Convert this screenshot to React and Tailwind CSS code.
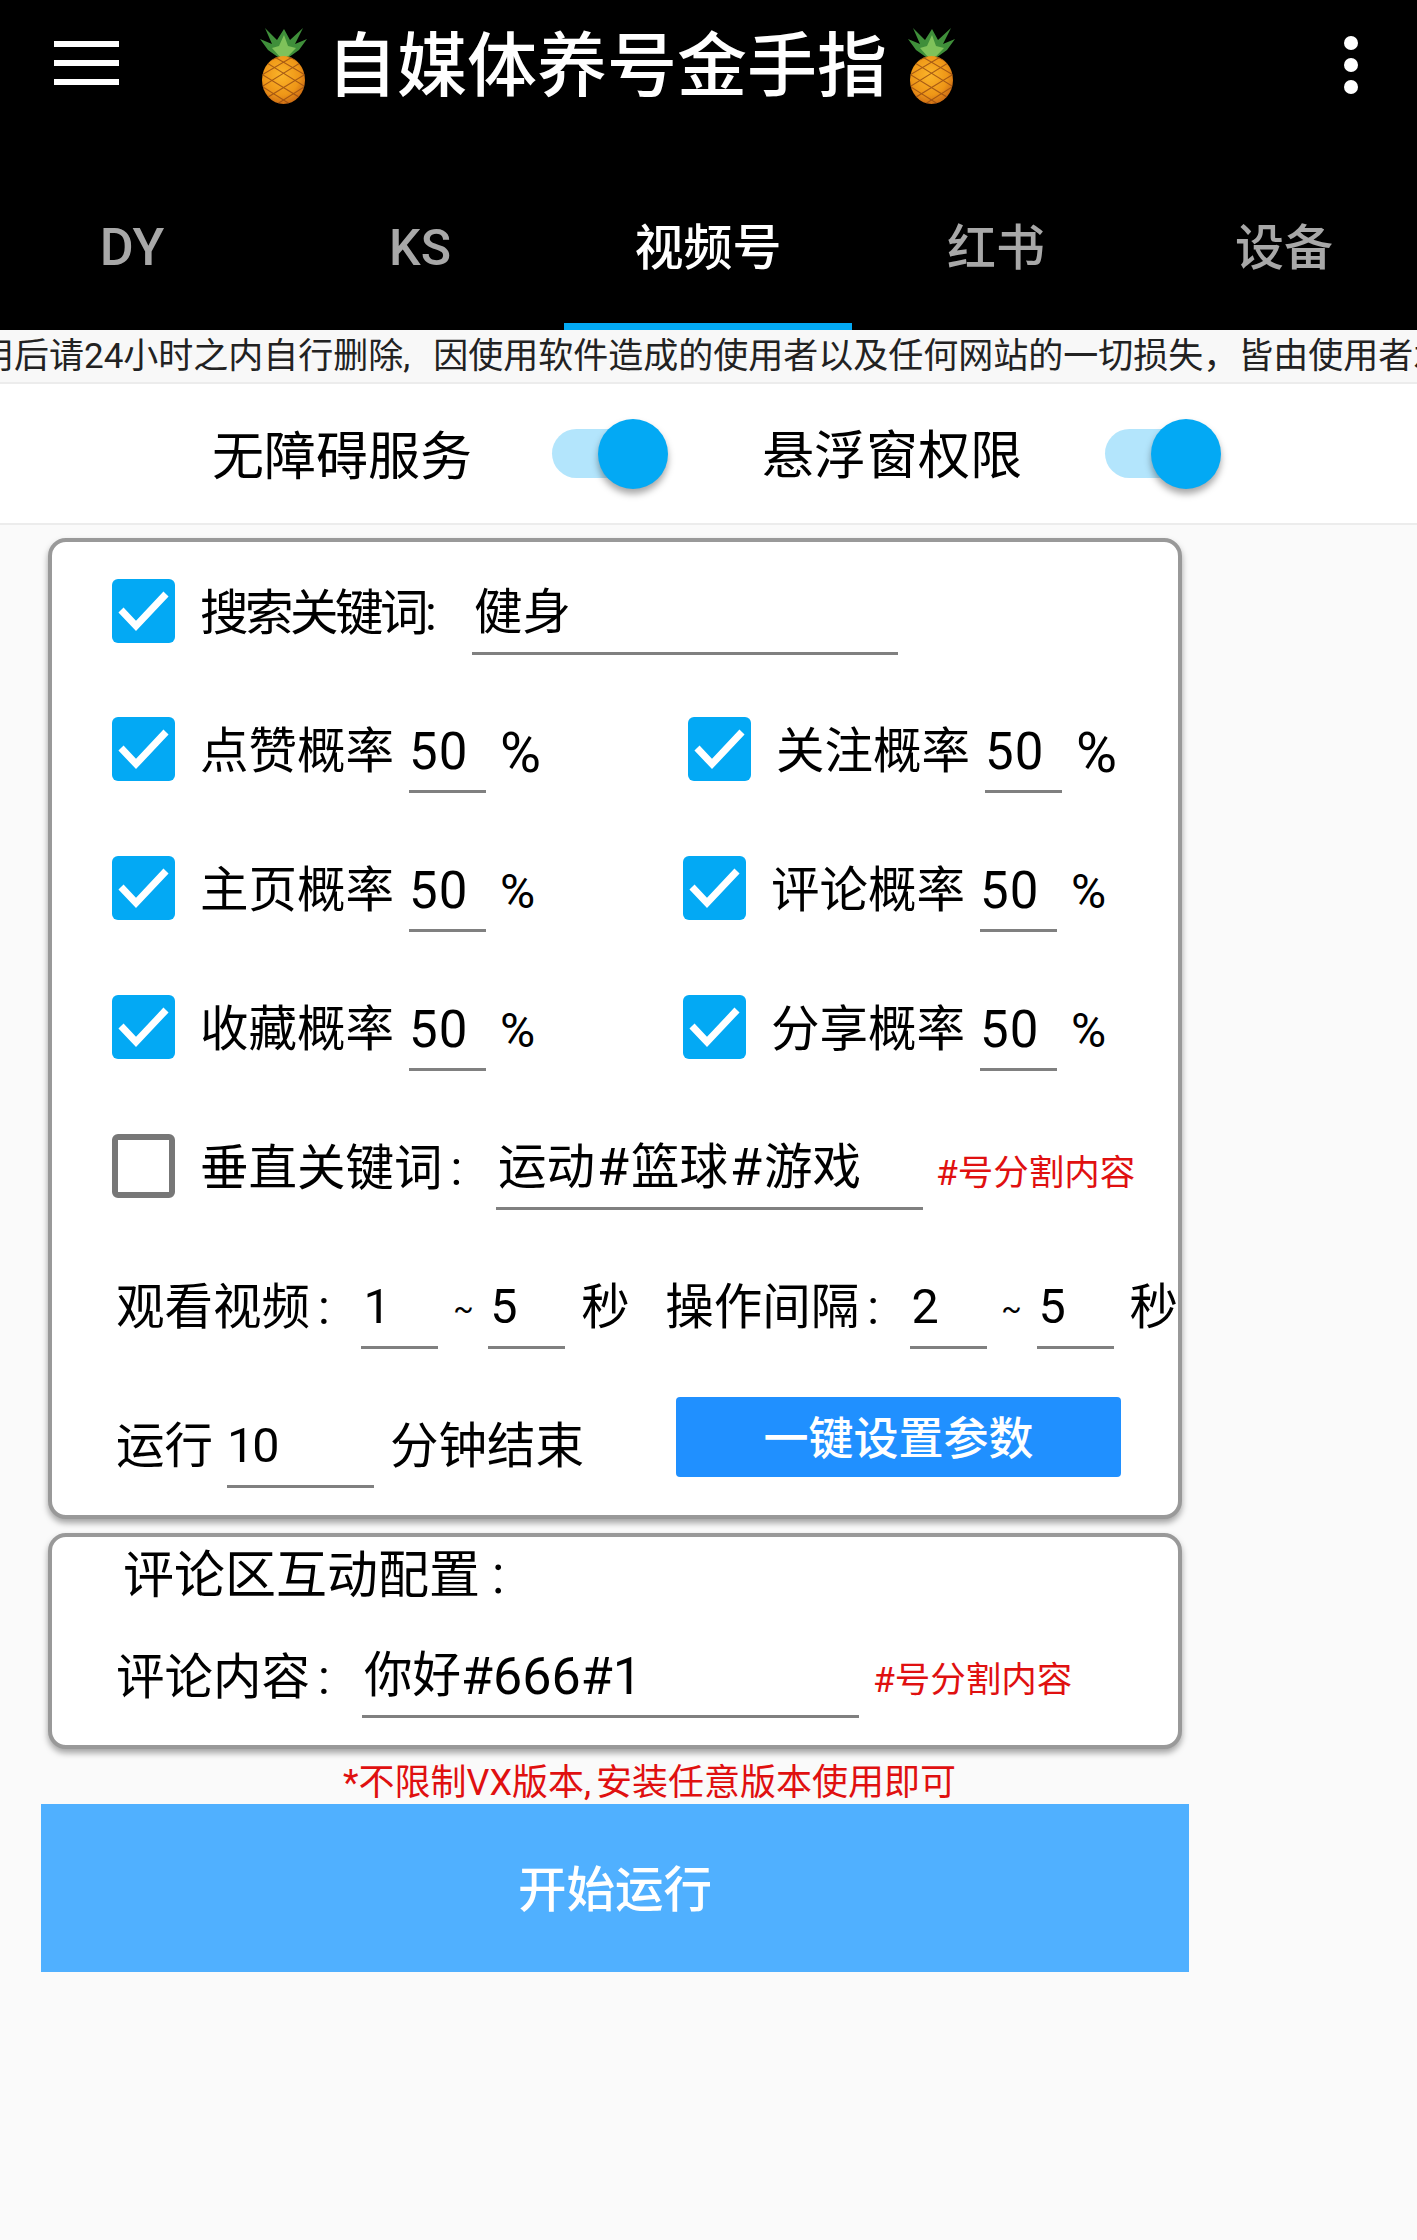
import React from 'react';

function Pineapple({ id }) {
    return (
        <svg width="47" height="76" viewBox="0 0 47 76" className="shrink-0">
            <defs>
                <radialGradient id={id} cx="0.45" cy="0.4" r="0.7">
                    <stop offset="0" stopColor="#fbb52a" />
                    <stop offset="0.6" stopColor="#ee9618" />
                    <stop offset="1" stopColor="#bd5a14" />
                </radialGradient>
                <clipPath id={id + 'c'}>
                    <ellipse cx="23.5" cy="52" rx="21.5" ry="24" />
                </clipPath>
            </defs>
            <path d="M23.5 33 L8 22 L0 11 L12 16 L5 0 L17 12 L24 1 L30 12 L43 0 L35 16 L47 11 L39 22 Z" fill="#3f8f3a" />
            <path d="M23.5 33 L12 20 L19 18 L24 7 L28 18 L36 20 Z" fill="#7fc25a" />
            <ellipse cx="23.5" cy="52" rx="21.5" ry="24" fill={`url(#${id})`} />
            <g clipPath={`url(#${id}c)`} stroke="#9a4f14" strokeWidth="1.1" fill="none" opacity="0.85">
                <path d="M-10 42 L20 28 M-10 54 L34 28 M-10 66 L48 30 M0 74 L52 42 M14 78 L52 54" />
                <path d="M57 42 L27 28 M57 54 L13 28 M57 66 L-1 30 M47 74 L-5 42 M33 78 L-5 54" />
            </g>
        </svg>
    );
}

function Check({ checked = true }) {
    if (!checked) {
        return <div className="w-[63px] h-[64px] shrink-0 rounded-[6px] border-[6px] border-[#777] bg-white" />;
    }
    return (
        <div className="w-[63px] h-[64px] shrink-0 rounded-[6px] bg-[#03a9f4]">
            <svg width="63" height="64" viewBox="0 0 63 64">
                <path d="M9 31 L24 47 L54 15" fill="none" stroke="white" strokeWidth="7" />
            </svg>
        </div>
    );
}

function Field({ width, children }) {
    return (
        <div className={`h-[88px] shrink-0 flex items-center whitespace-nowrap pt-[8px] border-b-[3px] border-[#808080] pl-[2px] ${width}`}>
            {children}
        </div>
    );
}

function Prob({ label, small, col }) {
    return (
        <div className={`flex items-center shrink-0 ${col}`}>
            <Check />
            <span className="ml-[25px] w-[193px] pt-[8px] whitespace-nowrap">{label}</span>
            <div className="ml-[16px]">
                <Field width="w-[77px]">
                    <span className="text-[51px] -ml-[2px] tracking-[1px]">50</span>
                </Field>
            </div>
            <span className={`ml-[14px] pt-[8px] ${small ? 'text-[48px]' : 'text-[56px]'}`}>%</span>
        </div>
    );
}

function Toggle() {
    return (
        <div className="relative w-[116px] h-[70px] shrink-0">
            <div className="absolute left-0 top-[10px] w-[92px] h-[49px] rounded-full bg-[#b3e5fc]" />
            <div className="absolute right-0 top-0 w-[70px] h-[70px] rounded-full bg-[#03a9f4] shadow-[0_5px_7px_rgba(0,0,0,0.35)]" />
        </div>
    );
}

function Row({ children, className = 'h-[139px]' }) {
    return <div className={`flex items-center shrink-0 ${className}`}>{children}</div>;
}

const tabs = ['DY', 'KS', '视频号', '红书', '设备'];

export default function App() {
    return (
        <div className="min-h-[2240px] bg-[#fafafa] text-black text-[48.5px] leading-none font-['Roboto','Noto_Sans_CJK_SC',sans-serif] overflow-hidden">
            {/* header */}
            <div className="bg-black h-[330px] overflow-hidden">
                <div className="h-[165px]">
                    <div className="h-[132px] flex items-center pl-[54px]">
                        <div className="w-[65px] mb-[7px] flex flex-col gap-[13px]">
                            <div className="h-[6px] bg-white" />
                            <div className="h-[6px] bg-white" />
                            <div className="h-[6px] bg-white" />
                        </div>
                        <div className="ml-[141px] flex items-center">
                            <Pineapple id="pa" />
                            <span className="ml-[20px] w-[581px] pt-[2px] text-[70px] font-medium text-white whitespace-nowrap">自媒体养号金手指</span>
                            <Pineapple id="pb" />
                        </div>
                        <div className="ml-auto mr-[59px] mb-[3px] flex flex-col gap-[8px]">
                            <div className="w-[14px] h-[14px] rounded-full bg-white" />
                            <div className="w-[14px] h-[14px] rounded-full bg-white" />
                            <div className="w-[14px] h-[14px] rounded-full bg-white" />
                        </div>
                    </div>
                </div>
                <div className="h-[165px] flex -ml-[12px]">
                    {tabs.map((t, i) => (
                        <div
                            key={t}
                            className={`w-[288px] shrink-0 flex items-center justify-center font-medium border-b-[7px] pt-[8px] ${i === 0 ? 'text-[52px]' : i === 1 ? 'text-[50px]' : 'text-[49px]'} ${i === 2 ? 'text-white border-[#03a9f4]' : 'text-[#a8a8a8] border-black'}`}
                        >
                            {t}
                        </div>
                    ))}
                </div>
            </div>

            {/* scrolling notice */}
            <div className="h-[54px] bg-[#f8f8f8] border-b-2 border-[#ececec] flex items-center overflow-hidden whitespace-nowrap text-[35px] text-[#222]">
                <span className="-ml-[21px]">
                    用后请24小时之内自行删除,<span className="ml-[23px]">因使用软件造成的使用者以及任何网站的一切损失，</span><span>皆由使用者承</span>
                </span>
            </div>

            {/* permission switches */}
            <div className="h-[141px] bg-white border-b-2 border-[#ececec] flex items-center pl-[212px] text-[52px]">
                <span className="w-[257px] pt-[8px] whitespace-nowrap">无障碍服务</span>
                <div className="ml-[83px]"><Toggle /></div>
                <span className="ml-[94px] w-[257px] pt-[6px] whitespace-nowrap">悬浮窗权限</span>
                <div className="ml-[86px]"><Toggle /></div>
            </div>

            <div className="w-[1148px] ml-[41px]">
                <div className="mx-[7px] mt-[13px] flex flex-col gap-[14px]">
                    {/* main settings card */}
                    <div className="bg-white border-[4px] border-[#999] rounded-[18px] pb-[2px] shadow-[0_4px_6px_rgba(0,0,0,0.35)]">
                        <Row className="h-[137px] pl-[60px]">
                            <Check />
                            <span className="ml-[25px] w-[272px] pt-[8px] tracking-[-3.5px] whitespace-nowrap">搜索关键词:</span>
                            <Field width="w-[426px]">健身</Field>
                        </Row>
                        <Row className="h-[139px] pl-[60px]">
                            <Prob label="点赞概率" col="w-[576px]" />
                            <Prob label="关注概率" col="" />
                        </Row>
                        <Row className="h-[139px] pl-[60px]">
                            <Prob label="主页概率" small col="w-[571px]" />
                            <Prob label="评论概率" small col="" />
                        </Row>
                        <Row className="h-[139px] pl-[60px]">
                            <Prob label="收藏概率" small col="w-[571px]" />
                            <Prob label="分享概率" small col="" />
                        </Row>
                        <Row className="h-[139px] pl-[60px]">
                            <Check checked={false} />
                            <span className="ml-[25px] w-[296px] pt-[8px] whitespace-nowrap">垂直关键词<span className="ml-[8px]">:</span></span>
                            <Field width="w-[427px]">
                                运动<span className="text-[52px] px-[2px]">#</span>篮球<span className="text-[52px] px-[2px]">#</span>游戏
                            </Field>
                            <span className="ml-[13px] mt-[16px] text-[35.5px] text-[#e01010] whitespace-nowrap">#号分割内容</span>
                        </Row>
                        <Row className="h-[139px] pl-[65px]">
                            <span className="w-[245px] pt-[8px] -indent-px whitespace-nowrap">观看视频<span className="ml-[8px]">:</span></span>
                            <Field width="w-[77px]">1</Field>
                            <span className="w-[50px] pt-[8px] text-center text-[30px]">~</span>
                            <Field width="w-[77px]">5</Field>
                            <span className="ml-[16px] w-[84px] pt-[8px]">秒</span>
                            <span className="w-[245px] pt-[8px] whitespace-nowrap">操作间隔<span className="ml-[8px]">:</span></span>
                            <Field width="w-[77px]">2</Field>
                            <span className="w-[50px] pt-[8px] text-center text-[30px]">~</span>
                            <Field width="w-[77px]">5</Field>
                            <span className="ml-[16px] pt-[8px]">秒</span>
                        </Row>
                        <Row className="h-[139px] pl-[65px]">
                            <span className="w-[110px] pt-[8px] -indent-px whitespace-nowrap">运行 </span>
                            <Field width="w-[147px]"><span className="-ml-[2px] tracking-[-2px]">10</span></Field>
                            <span className="ml-[16px] w-[286px] pt-[8px] whitespace-nowrap">分钟结束</span>
                            <div className="w-[445px] h-[80px] -mt-[14px] pt-[6px] rounded-[4px] bg-[#2090ff] text-white text-[45px] font-medium flex items-center justify-center">
                                一键设置参数
                            </div>
                        </Row>
                    </div>

                    {/* comment card */}
                    <div className="h-[216px] bg-white border-[4px] border-[#999] rounded-[18px] shadow-[0_4px_6px_rgba(0,0,0,0.35)]">
                        <div className="h-[93px] pb-[17px] pl-[71px] flex items-center text-[51px] whitespace-nowrap">评论区互动配置<span className="ml-[12px]">:</span></div>
                        <div className="flex items-center pl-[65px]">
                            <span className="w-[245px] pt-[8px] -indent-px whitespace-nowrap">评论内容<span className="ml-[8px]">:</span></span>
                            <Field width="w-[497px]">你好<span className="text-[52px]">#666#1</span></Field>
                            <span className="ml-[14px] mt-[14px] text-[35.5px] text-[#e01010] whitespace-nowrap">#号分割内容</span>
                        </div>
                    </div>
                </div>

                <div className="h-[55px] flex items-center pt-[12px] pl-[302px] text-[36px] text-[#e01010] whitespace-nowrap">
                    *不限制VX版本<span className="mr-[5px]">,</span>安装任意版本使用即可
                </div>

                <div className="h-[168px] pt-[6px] bg-[#50b0ff] text-white font-medium flex items-center justify-center">开始运行</div>
            </div>
        </div>
    );
}
